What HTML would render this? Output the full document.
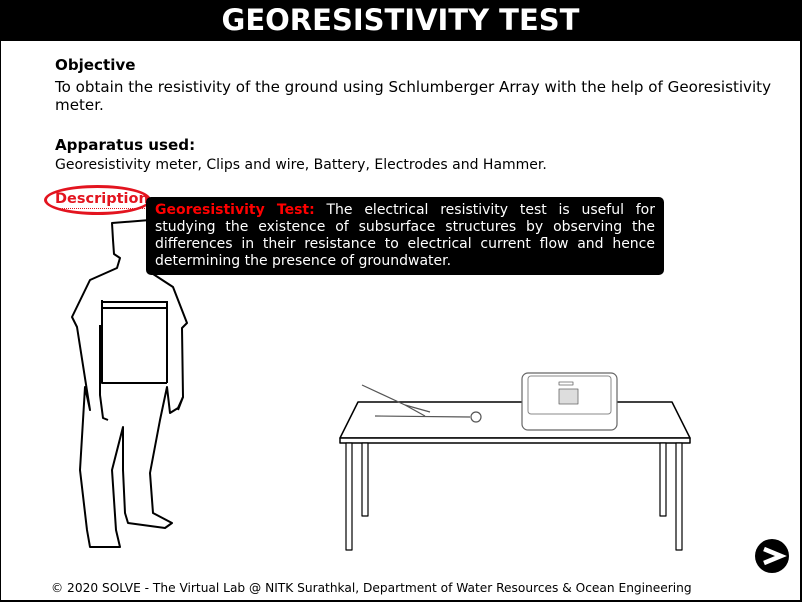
<!DOCTYPE html>
<html><head><style>
body{margin:0;width:803px;height:607px;background:#fff;font-family:"DejaVu Sans","Liberation Sans",sans-serif;position:relative;overflow:hidden;color:#000}
#frame{position:absolute;left:0;top:0;width:799px;height:599px;border:1px solid #000;border-right-width:2px;border-bottom-width:2px}
#hdr{position:absolute;left:0;top:0;width:801px;height:41px;background:#000;color:#fff;font-weight:bold;font-size:29px;text-align:center;line-height:41px}
.t{position:absolute;left:55px;font-size:15.1px;white-space:nowrap}
#desc{position:absolute;left:146px;top:197px;width:500px;height:70px;padding:5px 9px 3px 9px;background:#000;color:#fff;border-radius:5px;font-size:14px;line-height:17px;text-align:justify}
#desc b{color:#f00}
#dl{position:absolute;left:44px;top:185px;width:107px;height:30px;border:3px solid #e3141f;border-radius:50%;box-sizing:border-box}
#dt{position:absolute;left:55px;top:191px;color:#e3141f;font-weight:bold;font-size:14.5px;border-bottom:1px dotted #e3141f;line-height:17px}
#foot{position:absolute;left:51px;top:581px;font-size:12.2px}
#nx{position:absolute;left:755px;top:539px;width:34px;height:34px;border-radius:50%;background:#000}
</style></head><body>
<div id="frame"></div>
<div id="hdr">GEORESISTIVITY TEST</div>
<div class="t" style="top:56px;font-weight:bold">Objective</div>
<div class="t" style="top:78px">To obtain the resistivity of the ground using Schlumberger Array with the help of Georesistivity</div>
<div class="t" style="top:96px">meter.</div>
<div class="t" style="top:136px;font-weight:bold">Apparatus used:</div>
<div class="t" style="top:157px;font-size:14px">Georesistivity meter, Clips and wire, Battery, Electrodes and Hammer.</div>
<svg style="position:absolute;left:0;top:0" width="803" height="607" fill="none" stroke="#000" stroke-width="2" stroke-linejoin="round">
<path fill="#fff" d="M112,223 L150,220 L150,272 L173,287 L187,323 L182,328 L183,397 L178,408 L170,413 L167,387 L160,420 L150,473 L153,513 L172,523 L165,528 L128,523 L125,513 L123,470 L123,427 L112,470 L116,530 L120,547 L90,547 L87,530 L80,470 L85,387 L90,410 L77,327 L72,317 L90,280 L117,268 L120,258 L114,254 L113,240 Z"/>
<path d="M102,300 L102,383 L167,383 M102,302 L168,302 M102,308 L168,308 M100,325 L100,395 L103,418 L108,420 M167,302 L167,383 M183,397 L178,410"/>
<path fill="#fff" stroke-width="1.5" d="M358,402 L672,402 L690,438 L340,438 Z"/>
<rect x="340" y="438" width="350" height="5" fill="#fff" stroke-width="1.5"/>
<rect x="346" y="443" width="6" height="107" fill="#fff" stroke-width="1.2"/>
<rect x="362" y="443" width="6" height="73" fill="#fff" stroke-width="1.2"/>
<rect x="660" y="443" width="6" height="73" fill="#fff" stroke-width="1.2"/>
<rect x="676" y="443" width="6" height="107" fill="#fff" stroke-width="1.2"/>
<rect x="522" y="373" width="95" height="57" rx="6" fill="#fff" stroke="#666" stroke-width="1.2"/>
<rect x="528" y="376" width="83" height="38" rx="3" fill="#fff" stroke="#888" stroke-width="1"/>
<rect x="559" y="389" width="19" height="15" fill="#ddd" stroke="#666" stroke-width="0.8"/>
<rect x="559" y="382" width="14" height="3" stroke="#666" stroke-width="0.8"/>
<path stroke="#555" stroke-width="1.2" d="M362,385 L405,405 L430,412 M375,416 L470,417 M405,405 L425,416"/>
<circle cx="476" cy="417" r="5" fill="#fff" stroke="#555" stroke-width="1.2"/>
</svg>
<div id="dl"></div>
<div id="dt">Description</div>
<div id="desc"><b>Georesistivity Test:</b> The electrical resistivity test is useful for studying the existence of subsurface structures by observing the differences in their resistance to electrical current flow and hence determining the presence of groundwater.</div>
<div id="nx"><svg width="34" height="34"><path d="M9,10 L26,17 L9,24" fill="none" stroke="#fff" stroke-width="4.5"/></svg></div>
<div id="foot">© 2020 SOLVE - The Virtual Lab @ NITK Surathkal, Department of Water Resources &amp; Ocean Engineering</div>
</body></html>
